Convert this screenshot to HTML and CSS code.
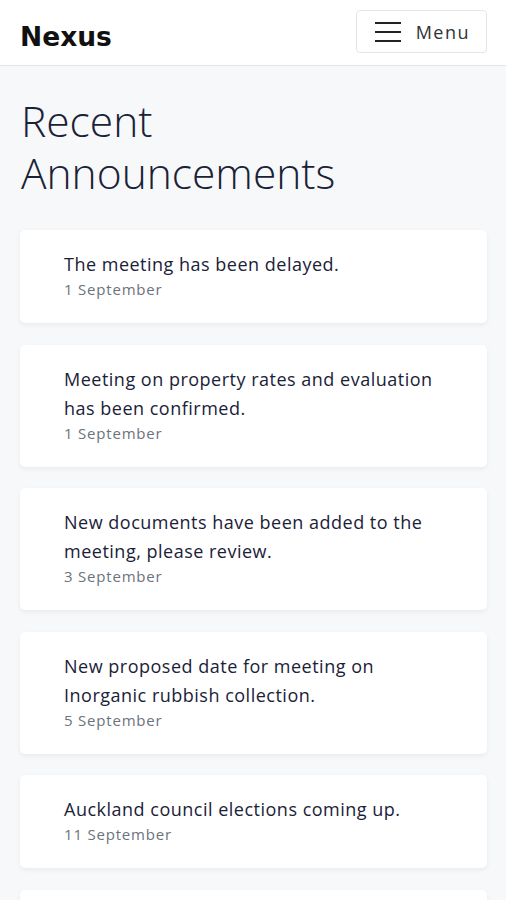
FILE: index.html
```html
<!DOCTYPE html>
<html>
<head>
    <title>Nexus - Announcements</title>
    <link rel="stylesheet" href="styles.css">
</head>
<body>
    <div class="header">
        <div class="brand">Nexus</div>
        <button class="menu-button">
            <svg class="menu-icon" width="26" height="20" viewBox="0 0 26 20">
                <path d="M0 1h26M0 10h26M0 19h26" stroke="#222" stroke-width="2" fill="none"/>
            </svg>
            <span>Menu</span>
        </button>
    </div>
    <div class="container">
        <h1 class="page-title">Recent<br>Announcements</h1>
        <div class="announcement">
            <div class="announcement-title">The meeting has been delayed.</div>
            <div class="announcement-date">1 September</div>
        </div>
        <div class="announcement">
            <div class="announcement-title">Meeting on property rates and evaluation has been confirmed.</div>
            <div class="announcement-date">1 September</div>
        </div>
        <div class="announcement">
            <div class="announcement-title">New documents have been added to the meeting, please review.</div>
            <div class="announcement-date">3 September</div>
        </div>
        <div class="announcement">
            <div class="announcement-title">New proposed date for meeting on Inorganic rubbish collection.</div>
            <div class="announcement-date">5 September</div>
        </div>
        <div class="announcement">
            <div class="announcement-title">Auckland council elections coming up.</div>
            <div class="announcement-date">11 September</div>
        </div>
        <div class="announcement">
            <div class="announcement-title">Agenda for the next community meeting is now available.</div>
            <div class="announcement-date">14 September</div>
        </div>
    </div>
</body>
</html>
```

FILE: styles.css
```css
body {
    font-family: "Open Sans", "Noto Sans", sans-serif;
    background-color: #f7f8f9;
    color: #1a2238;
    margin: 0;
    padding: 0;
}

.header {
    display: flex;
    align-items: center;
    justify-content: space-between;
    height: 65px;
    padding: 0 19px 0 20px;
    background-color: #fff;
    border-bottom: 1px solid #e3e6e9;
}

.brand {
    font-family: "DejaVu Sans", Verdana, sans-serif;
    font-size: 26.5px;
    font-weight: 700;
    color: #111;
    margin-top: 7px;
}

.menu-button {
    display: flex;
    align-items: center;
    height: 43px;
    padding: 0 16px 0 18px;
    background-color: #fff;
    border: 1px solid #e3e6e9;
    border-radius: 4px;
    font-family: "Open Sans", sans-serif;
    font-size: 18px;
    letter-spacing: 1.5px;
    color: #333;
    margin-top: -2px;
}

.menu-icon {
    margin-right: 15px;
}

.container {
    padding: 0 19px 0 20px;
}

.page-title {
    font-size: 42.5px;
    font-weight: 300;
    line-height: 52px;
    margin: 29px 0 31px 1px;
    color: #1a2238;
}

.announcement {
    background-color: #fff;
    border-radius: 5px;
    padding: 20px 40px 24px 44px;
    margin-bottom: 21.5px;
    box-shadow: 0 2px 5px rgba(0, 0, 0, 0.06);
}

.announcement-title {
    font-size: 18px;
    line-height: 29px;
    letter-spacing: 0.5px;
}

.announcement-date {
    font-size: 15px;
    line-height: 20px;
    letter-spacing: 0.8px;
    color: #6b737c;
}
```
